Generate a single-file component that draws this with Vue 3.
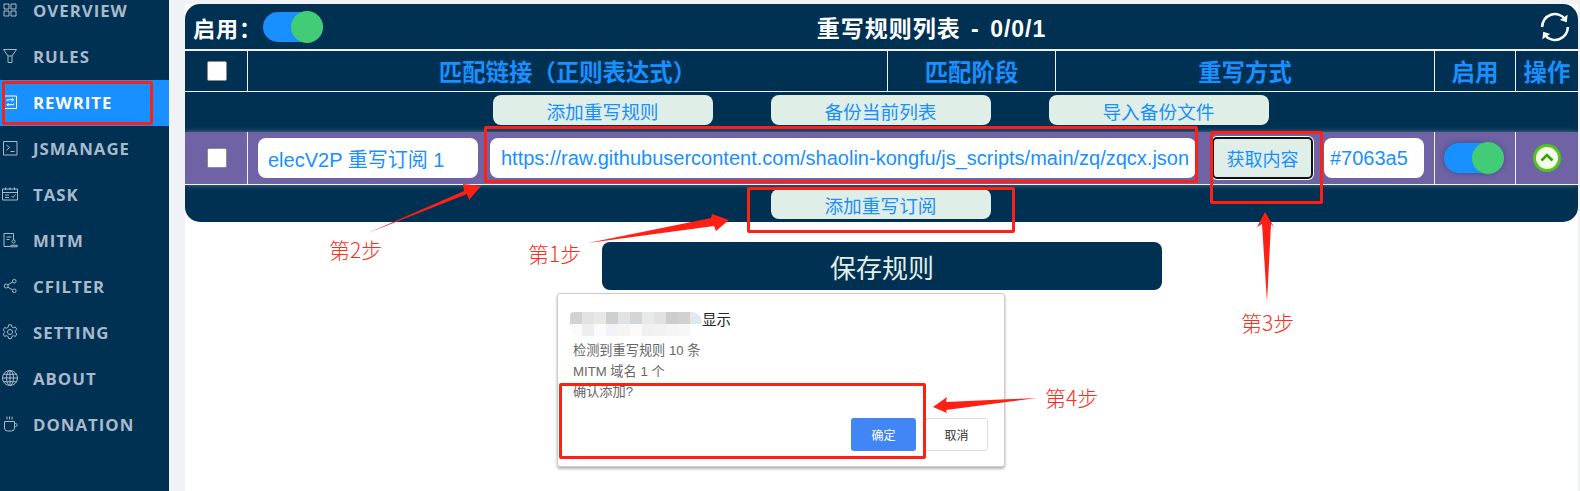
<script setup>
const navItems = [
  { label: 'OVERVIEW', paths: ['M3 3h5v5H3z', 'M10 3h5v5h-5z', 'M3 10h5v5H3z', 'M10 10h5v5h-5z'] },
  { label: 'RULES', paths: ['M2.5 2.5h13L11 9v6.5H7V9z', 'M7 9h4'] },
  { label: 'REWRITE', active: true, paths: ['M3 3h12.5v12.5H3z', 'M6 8V6.8h6.5M11 5.2l1.6 1.6L11 8.4', 'M12.5 10.6v1.1H6M7.6 10.1 6 11.7l1.6 1.6'] },
  { label: 'JSMANAGE', paths: ['M2.5 2.5h13.5v13.5H2.5z', 'M5.5 6l3 2.6-3 2.6', 'M9.5 12.5h4'] },
  { label: 'TASK', paths: ['M1.5 4h15v11h-15z', 'M1.5 7.5h15', 'M4.5 2.5V5M9 2.5V5M13.5 2.5V5', 'M4 10h4M4 12.5h4', 'M10.5 11l1.5 1.5 2.5-3'] },
  { label: 'MITM', paths: ['M12.5 9V2.5H3v13h6', 'M5.5 6h5M5.5 8.5h3', 'M11 10.5a1.6 1.6 0 1 0 3.2 0 1.6 1.6 0 1 0-3.2 0', 'M9.7 15.8v-1.5h6.5v1.5z'] },
  { label: 'CFILTER', paths: ['M3.2 9a2 2 0 1 0 4 0 2 2 0 1 0-4 0', 'M11.5 4.2a1.8 1.8 0 1 0 3.6 0 1.8 1.8 0 1 0-3.6 0', 'M11.5 13.8a1.8 1.8 0 1 0 3.6 0 1.8 1.8 0 1 0-3.6 0', 'M6.8 7.8l4.9-2.7M6.8 10.2l4.9 2.7'] },
  { label: 'SETTING', paths: ['M7.6 1.8h2.8l.5 2.1 1.5.8 2-.7 1.4 2.4-1.5 1.5v1.6l1.5 1.5-1.4 2.4-2-.7-1.5.8-.5 2.1H7.6l-.5-2.1-1.5-.8-2 .7-1.4-2.4 1.5-1.5V8.4L2.2 6.9l1.4-2.4 2 .7 1.5-.8z', 'M6.5 9a2.5 2.5 0 1 0 5 0 2.5 2.5 0 1 0-5 0'] },
  { label: 'ABOUT', paths: ['M1.5 9a7.5 7.5 0 1 0 15 0 7.5 7.5 0 1 0-15 0', 'M5.5 9a3.5 7.5 0 1 0 7 0 3.5 7.5 0 1 0-7 0', 'M9 1.5v15', 'M1.5 9h15', 'M2.5 5.3h13M2.5 12.7h13'] },
  { label: 'DONATION', paths: ['M6 1.5v3M8.5 1.5v3M11 1.5v3', 'M3.5 6.5h10v6.5a3 3 0 0 1-3 3h-4a3 3 0 0 1-3-3z', 'M13.5 8.5h1.2a1.3 1.3 0 0 1 1.3 1.3v.4a1.3 1.3 0 0 1-1.3 1.3h-1.2'] }
]

const columns = ['匹配链接（正则表达式）', '匹配阶段', '重写方式', '启用', '操作']
const tools = ['添加重写规则', '备份当前列表', '导入备份文件']
const blurColors = ['#d2d2d2', '#e3e3e3', '#e8e9e4', '#cfcfcf', '#e0e3e5', '#d4d6d6', '#e8eaea', '#e2e2e2', '#cdcdcd', '#d2d1cd', '#e2e9ec',
  '#fafafa', '#eeeeee', '#fbfbfb', '#f1f3f7', '#f6f5f1', '#fafafa', '#f0f0f0', '#f2f2f2', '#f5f5f5', '#f7f7f7', '#ffffff']
const redBoxes = [
  { name: 'rewrite' }, { name: 'url' }, { name: 'fetch' }, { name: 'sub' }, { name: 'confirm' }
]
const steps = ['第2步', '第1步', '第3步', '第4步']
</script>

<template>
  <div class="page">
    <aside class="sidebar">
      <ul class="nav">
        <li v-for="item in navItems" :key="item.label" class="nav-item" :class="{ active: item.active }">
          <svg class="nav-icon" viewBox="0 0 18 18" fill="none" stroke="currentColor" stroke-width="1">
            <path v-for="d in item.paths" :key="d" :d="d" />
          </svg>
          <span>{{ item.label }}</span>
        </li>
      </ul>
    </aside>

    <main class="main">
      <div class="sheet">
        <section class="panel">
          <header class="title-row">
            <div class="enable">
              <span class="enable-label">启用：</span>
              <span class="toggle"><i class="knob"></i></span>
            </div>
            <h1 class="title">重写规则列表 - 0/0/1</h1>
            <svg class="refresh" viewBox="0 0 28 28" fill="none" stroke="#fff" stroke-width="2.4">
              <path d="M2 14A12 12 0 0 1 23.5 6.6" />
              <path d="M26 14A12 12 0 0 1 4.5 21.4" />
              <path d="M25.8 2.5 25 9.5 18.5 7.5z" fill="#fff" stroke="none" />
              <path d="M2.2 25.5 3 18.5l6.5 2z" fill="#fff" stroke="none" />
            </svg>
          </header>

          <div class="head-row">
            <div class="cell"><span class="check"></span></div>
            <div v-for="c in columns" :key="c" class="cell head-cell">{{ c }}</div>
          </div>

          <div class="tools tools-top">
            <button v-for="t in tools" :key="t" class="soft-btn">{{ t }}</button>
          </div>

          <div class="sub-row">
            <div class="cell"><span class="check"></span></div>
            <div class="cell sub-fields">
              <span class="field field-name">elecV2P 重写订阅 1</span>
              <span class="field field-url">https://raw.githubusercontent.com/shaolin-kongfu/js_scripts/main/zq/zqcx.json</span>
              <button class="soft-btn fetch-btn">获取内容</button>
              <span class="field field-color">#7063a5</span>
            </div>
            <div class="cell toggle-cell">
              <span class="toggle shadowed"><i class="knob"></i></span>
            </div>
            <div class="cell">
              <svg class="expand" viewBox="0 0 28 28">
                <circle cx="14" cy="14" r="12.5" fill="#f3fcea" stroke="#52c41a" stroke-width="3" />
                <path d="M8.5 16.5 14 11l5.5 5.5" fill="none" stroke="#389e0d" stroke-width="2.6" />
              </svg>
            </div>
          </div>

          <div class="tools tools-bottom">
            <button class="soft-btn">添加重写订阅</button>
          </div>
        </section>

        <button class="save">保存规则</button>
      </div>
    </main>

    <div class="dialog">
      <div class="dialog-head">
        <div class="blur">
          <i v-for="(c, i) in blurColors" :key="i" :style="{ background: c }"></i>
        </div>
        <span class="dialog-title">显示</span>
      </div>
      <p class="dialog-line first">检测到重写规则 10 条</p>
      <p class="dialog-line">MITM 域名 1 个</p>
      <p class="dialog-line">确认添加?</p>
      <div class="dialog-actions">
        <button class="ok">确定</button>
        <button class="cancel">取消</button>
      </div>
    </div>

    <div v-for="b in redBoxes" :key="b.name" class="red-box" :class="b.name"></div>

    <svg class="arrows" viewBox="0 0 1580 491">
      <path d="M368 233 464 191 463 184 481 186 469 200 467 194z" />
      <path d="M588 243 711 218 712 214 729 220 716 231 714 226z" />
      <path d="M1265 212 1274 227 1271 224 1267 302 1262 224 1257 227z" />
      <path d="M1037 398 946 402 947 397 933 407 947 413 946 410z" />
    </svg>

    <span v-for="(s, i) in steps" :key="s" class="step" :class="'step-' + (i + 1)">{{ s }}</span>
  </div>
</template>

<style>
html, body { margin: 0; padding: 0; background: #fff; }
</style>

<style scoped>
.page {
  position: relative;
  display: flex;
  width: 1580px;
  height: 491px;
  overflow: hidden;
  font-family: "Liberation Sans", "Noto Sans CJK SC", sans-serif;
}
.sidebar {
  flex: 0 0 169px;
  background: #003153;
  overflow: hidden;
}
.nav {
  list-style: none;
  margin: -12px 0 0;
  padding: 0;
}
.nav-item {
  display: flex;
  align-items: center;
  gap: 14px;
  box-sizing: border-box;
  height: 46px;
  padding: 0 0 2px 1px;
  color: #a9b9cc;
  font: 700 16.8px "Open Sans", sans-serif;
  letter-spacing: 1px;
}
.nav-item.active {
  background: #1890ff;
  color: #fff;
}
.nav-icon {
  flex: 0 0 18px;
  width: 18px;
  height: 18px;
}
.main {
  flex: 1;
  background: #f0f2f5;
  padding: 4px 2px 0 16px;
}
.sheet {
  height: 100%;
  background: #fff;
  display: flex;
  flex-direction: column;
}
.panel {
  height: 218px;
  background: #003153;
  border-radius: 15px;
  overflow: hidden;
}
.title-row {
  display: flex;
  align-items: center;
  justify-content: space-between;
  height: 45px;
  padding: 0 8px 0 8px;
}
.enable {
  display: flex;
  align-items: center;
}
.enable-label {
  width: 70px;
  color: #fff;
  font-size: 22px;
  font-weight: 700;
  letter-spacing: 1px;
}
.toggle {
  position: relative;
  display: block;
  width: 60px;
  height: 30px;
  border-radius: 15px;
  background: #1890ff;
}
.toggle.shadowed {
  box-shadow: 0 0 6px rgba(0, 49, 83, 0.45);
}
.toggle-cell {
  padding-right: 3px;
}
.knob {
  position: absolute;
  right: 0;
  top: -1px;
  width: 32px;
  height: 32px;
  border-radius: 50%;
  background: #42cc75;
}
.title {
  margin: 0;
  color: #fff;
  font-size: 23px;
  font-weight: 700;
  letter-spacing: 1px;
  word-spacing: 3px;
}
.refresh {
  width: 30px;
  height: 30px;
  display: block;
}
.head-row,
.sub-row {
  display: grid;
  border-bottom: 1px solid #f0f2f5;
}
.head-row {
  grid-template-columns: 62px 640px 168px 379px 81px 63px;
  height: 40px;
  border-top: 2px solid #f0f2f5;
}
.sub-row {
  grid-template-columns: 62px 1187px 81px 63px;
  height: 52px;
  margin-top: 7px;
  background: #7063a5;
  box-shadow: 0 0 5px rgba(255, 255, 255, 0.35);
}
.cell {
  display: flex;
  align-items: center;
  justify-content: center;
  border-left: 1px solid #f0f2f5;
}
.cell:first-child {
  border-left: 0;
  padding-left: 2px;
}
.head-cell {
  color: #1890ff;
  font-size: 23.4px;
  font-weight: 700;
}
.check {
  width: 18px;
  height: 18px;
  background: #fff;
  border: 1px solid #8c8c8c;
  border-radius: 2px;
}
.tools {
  display: flex;
  justify-content: center;
  gap: 58px;
  padding-right: 2px;
}
.tools-top {
  padding-top: 3px;
}
.tools-bottom {
  padding-top: 4px;
}
.soft-btn {
  width: 220px;
  height: 30px;
  padding: 0;
  border: 0;
  border-radius: 8px;
  background: #e0eee8;
  color: #1890ff;
  font: 18.7px "Liberation Sans", "Noto Sans CJK SC", sans-serif;
}
.sub-fields {
  justify-content: flex-start;
  padding-left: 10px;
}
.field {
  display: flex;
  align-items: center;
  height: 40px;
  background: #fff;
  border-radius: 8px;
  color: #1890ff;
  font-size: 20px;
  white-space: nowrap;
  box-sizing: border-box;
}
.field-name {
  width: 220px;
  padding-left: 10px;
}
.field-url {
  width: 706px;
  margin-left: 12px;
  padding-left: 11px;
}
.fetch-btn {
  flex: none;
  width: 101px;
  height: 42px;
  margin-left: 16px;
  border: 2px solid #111;
  box-shadow: 0 0 0 1px #fff;
  border-radius: 5px;
  font-size: 18px;
}
.field-color {
  width: 100px;
  margin-left: 11px;
  padding-left: 6px;
}
.expand {
  width: 28px;
  height: 28px;
  display: block;
}
.save {
  align-self: flex-start;
  width: 560px;
  height: 48px;
  margin: 20px 0 0 417px;
  border: 0;
  border-radius: 8px;
  background: #003153;
  color: #e0eee8;
  font: 26px "Liberation Sans", "Noto Sans CJK SC", sans-serif;
}
.dialog {
  position: absolute;
  left: 557px;
  top: 293px;
  width: 448px;
  height: 174px;
  box-sizing: border-box;
  padding: 18px 17px 0 13px;
  background: #fff;
  border: 1px solid #ccc;
  border-radius: 3px;
  box-shadow: 0 2px 3px rgba(0, 0, 0, 0.3);
}
.dialog-head {
  display: flex;
  align-items: flex-start;
  height: 24px;
  font-size: 14.5px;
  color: #222;
}
.dialog-title {
  line-height: 16px;
}
.blur {
  display: grid;
  grid-template-columns: repeat(11, 12px);
  grid-auto-rows: 12px;
  width: 132px;
  border-radius: 4px 10px 10px 8px;
  overflow: hidden;
  margin-left: -1px;
}
.dialog-line {
  margin: 0;
  height: 20.5px;
  line-height: 20.5px;
  font-size: 13.2px;
  color: #666;
  padding-left: 2px;
}
.dialog-line.first {
  margin-top: 5px;
}
.dialog-actions {
  position: absolute;
  right: 16px;
  bottom: 15px;
  display: flex;
  gap: 9px;
  align-items: center;
}
.ok,
.cancel {
  height: 33px;
  padding: 0;
  border-radius: 3px;
  font: 12px "Liberation Sans", "Noto Sans CJK SC", sans-serif;
}
.ok {
  width: 65px;
  border: 0;
  background: #4285f4;
  color: #fff;
}
.cancel {
  width: 63px;
  border: 1px solid #dadce0;
  background: #fff;
  color: #333;
}
.red-box {
  position: absolute;
  box-sizing: border-box;
  border: 3px solid #fe2015;
  border-radius: 2px;
}
.rewrite { left: 2px; top: 81px; width: 151px; height: 44px; }
.url { left: 484px; top: 126px; width: 714px; height: 57px; }
.fetch { left: 1210px; top: 131px; width: 113px; height: 73px; }
.sub { left: 747px; top: 187px; width: 268px; height: 46px; }
.confirm { left: 559px; top: 383px; width: 367px; height: 76px; }
.arrows {
  position: absolute;
  left: 0;
  top: 0;
  width: 1580px;
  height: 491px;
  fill: #fe2015;
  pointer-events: none;
}
.step {
  position: absolute;
  color: #fe2c20;
  font-size: 21px;
  line-height: 26px;
  font-family: "Noto Sans CJK SC", sans-serif;
  font-weight: 300;
}
.step-1 { left: 329px; top: 236px; }
.step-2 { left: 528px; top: 240px; }
.step-3 { left: 1241px; top: 309px; }
.step-4 { left: 1045px; top: 384px; }
</style>
